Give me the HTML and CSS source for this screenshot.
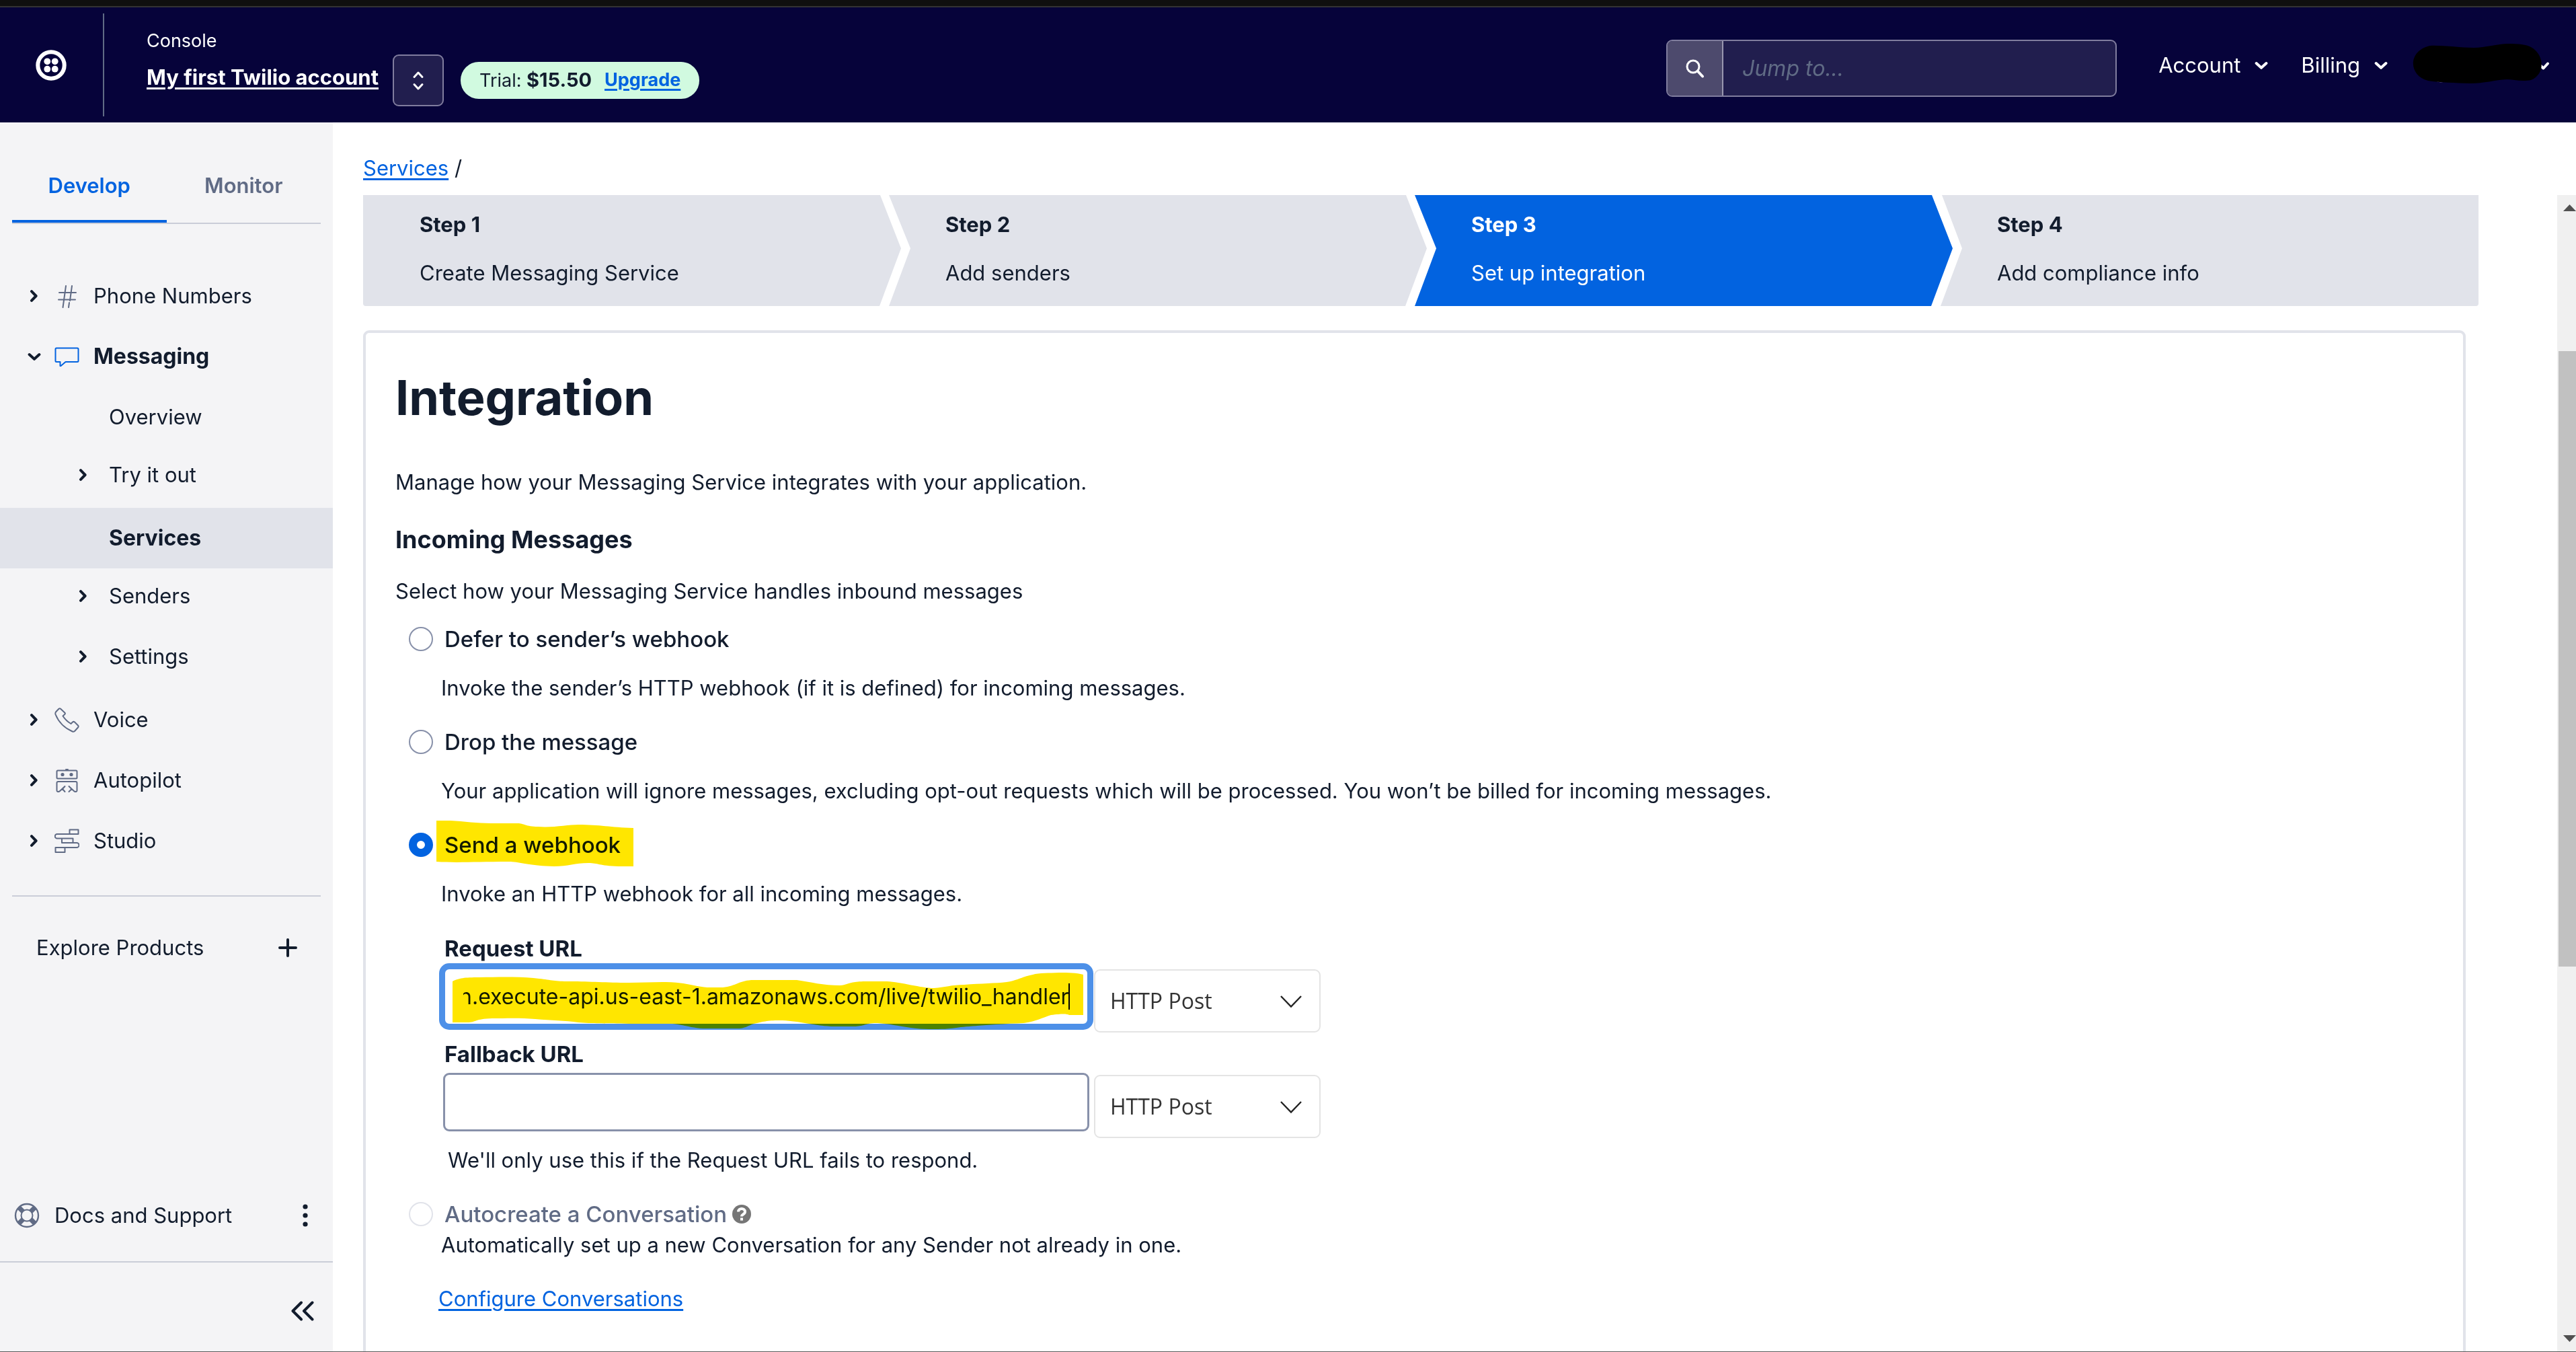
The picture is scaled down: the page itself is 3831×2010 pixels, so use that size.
FILE: index.html
```html
<!DOCTYPE html>
<html lang="en">
<head>
<meta charset="utf-8">
<meta name="viewport" content="width=device-width, initial-scale=1">
<title>Messaging Service integration | Console</title>
<link rel="stylesheet" href="styles.css">
</head>
<body>
<svg class="sprite" aria-hidden="true">
  <symbol id="chev-right" viewBox="0 0 18 18"><path d="M6 2.2 12.6 9 6 15.8" fill="none" stroke="currentColor" stroke-width="4" stroke-linecap="round" stroke-linejoin="round"/></symbol>
  <symbol id="chev-down" viewBox="0 0 20 20"><path d="M2.6 7 10 13.8 17.4 7" fill="none" stroke="currentColor" stroke-width="4" stroke-linecap="round" stroke-linejoin="round"/></symbol>
  <symbol id="select-arrow" viewBox="0 0 34 20"><path d="M2 2 17 17.500 32 2" fill="none" stroke="currentColor" stroke-width="2.400"/></symbol>
</svg>
<div class="app">
  <div class="window-edge"></div>
  <header class="topbar">
    <a class="logo" href="#" aria-label="Home">
      <svg viewBox="0 0 46 46"><circle cx="23" cy="23" r="19.700" fill="none" stroke="#fff" stroke-width="6"/><g fill="#fff"><circle cx="17.300" cy="17.300" r="4.900"/><circle cx="28.700" cy="17.300" r="4.900"/><circle cx="17.300" cy="28.700" r="4.900"/><circle cx="28.700" cy="28.700" r="4.900"/></g></svg>
    </a>
    <div class="account">
      <div class="account-names">
        <span class="account-kind">Console</span>
        <a class="account-name" href="#">My first Twilio account</a>
      </div>
      <div class="account-tools">
        <button class="switcher" type="button" aria-label="Switch account">
          <svg viewBox="0 0 18 30" fill="none" stroke="#fff" stroke-width="3" stroke-linecap="round" stroke-linejoin="round"><path d="M3 9.500 9 3l6 6.500M3 20.500 9 27l6-6.500"/></svg>
        </button>
        <div class="trial"><span>Trial: <b>$15.50</b></span><a href="#">Upgrade</a></div>
      </div>
    </div>
    <div class="topbar-right">
      <form class="search" role="search">
        <label class="search-icon" for="jump" aria-label="Search"><svg viewBox="0 0 28 28" fill="none" stroke="#fff" stroke-linecap="round"><circle cx="11" cy="11" r="9" stroke-width="3"/><path d="m18 18 7 7.500" stroke-width="4"/></svg></label>
        <input id="jump" type="text" placeholder="Jump to...">
      </form>
      <button class="menu menu-account" type="button">Account<svg><use href="#chev-down"/></svg></button>
      <button class="menu menu-billing" type="button">Billing<svg><use href="#chev-down"/></svg></button>
      <button class="user" type="button" aria-label="User menu">
        <svg viewBox="0 0 208 66"><path d="M29 51h30c-4 10-24 12-30 0z" fill="#c4a8ee"/><path d="m188.500 32 7 6.500 6.500-7" fill="none" stroke="#fff" stroke-width="4" stroke-linecap="round" stroke-linejoin="round"/><path d="M27 5C44 4 72 8 92 8c18 0 34-6 52-6 12 0 27 1 33 5 20 11 22 40 0 49-14 3-26-1-36-1-18 1-34 6-54 6-23-1-45-1-63-4C-6 49-6 12 27 5z" fill="#000"/></svg>
      </button>
    </div>
  </header>

  <div class="body">
    <nav class="sidebar" aria-label="Products">
      <div class="tabs" role="tablist">
        <button class="tab tab-active" type="button" role="tab" aria-selected="true">Develop</button>
        <button class="tab" type="button" role="tab" aria-selected="false">Monitor</button>
      </div>
      <ul class="nav">
        <li><a class="nav-row" href="#"><svg class="chev"><use href="#chev-right"/></svg><svg class="nav-icon" viewBox="0 0 37 37" fill="none" stroke="#606b85" stroke-width="2" stroke-linecap="round"><path d="M17 3 12.500 35M26 3 23 25M22 28l-1 7M7 13h25M6 23.500h25"/></svg>Phone Numbers</a></li>
        <li><a class="nav-row nav-open" href="#"><svg class="chev chev-open"><use href="#chev-down"/></svg><svg class="nav-icon" viewBox="0 0 37 37" fill="none" stroke="#0263e0" stroke-width="2" stroke-linejoin="round"><path d="M3 5.500h31a1.500 1.500 0 0 1 1.500 1.500v17.500a1.500 1.500 0 0 1-1.500 1.500H16.500L9.500 32H8.500V26H3a1.500 1.500 0 0 1-1.500-1.500V7A1.500 1.500 0 0 1 3 5.500z"/></svg>Messaging</a>
          <ul class="subnav">
            <li><a class="nav-row nav-leaf" href="#">Overview</a></li>
            <li><a class="nav-row nav-sub" href="#"><svg class="chev"><use href="#chev-right"/></svg>Try it out</a></li>
            <li><a class="nav-row nav-leaf nav-current" href="#" aria-current="page">Services</a></li>
            <li><a class="nav-row nav-sub" href="#"><svg class="chev"><use href="#chev-right"/></svg>Senders</a></li>
            <li><a class="nav-row nav-sub" href="#"><svg class="chev"><use href="#chev-right"/></svg>Settings</a></li>
          </ul>
        </li>
        <li><a class="nav-row" href="#"><svg class="chev"><use href="#chev-right"/></svg><svg class="nav-icon" viewBox="0 0 37 37" fill="none" stroke="#606b85" stroke-width="2" stroke-linejoin="round"><path d="M2 6.500 6.500 1.800q1.300-1 2.600 0l6.100 5.600q1.300 1.400 0 2.700L12.500 12.500Q17 19.500 24.500 24L27 21.500q1.500-1.200 3 0l5 5q1.300 1.500 0 3L30 35q-1.500 1.300-3.300.5Q8.500 27.500 1.500 10 1 8 2 6.500z"/></svg>Voice</a></li>
        <li><a class="nav-row" href="#"><svg class="chev"><use href="#chev-right"/></svg><svg class="nav-icon" viewBox="0 0 37 37" fill="none" stroke="#606b85" stroke-width="2" stroke-linecap="round" stroke-linejoin="round"><rect x="3.500" y="3.500" width="30" height="12" rx="1.500"/><path d="M17 2h3"/><circle cx="12" cy="9.500" r="1.600" fill="#606b85"/><circle cx="25" cy="9.500" r="1.600" fill="#606b85"/><path d="M15.500 35 12 31l3.500-4-8 7.500Q3.500 36 3.500 33V22q0-2 2-2h26q2 0 2 2v11q0 3-4 1.500l-8-7.500 4 4-4 4"/></svg>Autopilot</a></li>
        <li><a class="nav-row" href="#"><svg class="chev"><use href="#chev-right"/></svg><svg class="nav-icon" viewBox="0 0 37 37" fill="none" stroke="#606b85" stroke-width="2" stroke-linejoin="round"><path d="M22.500 8V1.500h13V8H4a3 3 0 0 0 0 6.500h23.500V21H11v-6.500M11 21h22a3 3 0 0 1 0 7H1.500v7h14v-7"/></svg>Studio</a></li>
      </ul>
      <a class="explore" href="#">Explore Products<svg viewBox="0 0 28 28" stroke="#121c2d" stroke-width="4" stroke-linecap="round"><path d="M14 2v24M2 14h24"/></svg></a>
      <div class="sidebar-foot">
        <div class="docs">
          <a href="#"><svg viewBox="0 0 38 38" fill="none" stroke="#606b85"><circle cx="19" cy="19" r="17" stroke-width="2.400"/><circle cx="19" cy="19" r="8.500" stroke-width="2"/><path d="m7.500 7.500 5.500 5.500M30.500 7.500 25 13M7.500 30.500 13 25M30.500 30.500 25 25" stroke-width="7"/></svg>Docs and Support</a>
          <button type="button" aria-label="More"><svg viewBox="0 0 8 36" fill="#121c2d"><circle cx="4" cy="5" r="3.600"/><circle cx="4" cy="18" r="3.600"/><circle cx="4" cy="31" r="3.600"/></svg></button>
        </div>
        <div class="collapse"><button type="button" aria-label="Collapse sidebar"><svg viewBox="0 0 34 30" fill="none" stroke="#121c2d" stroke-width="4" stroke-linecap="round" stroke-linejoin="round"><path d="M15 2.500 2.500 15 15 27.500M31.500 2.500 19 15l12.500 12.500"/></svg></button></div>
      </div>
    </nav>

    <main class="main">
      <div class="crumbs"><a href="#">Services</a> /</div>
      <div class="scroller">
        <div class="content">
          <ol class="steps">
            <li class="step"><b>Step 1</b><span>Create Messaging Service</span></li>
            <li class="step"><b>Step 2</b><span>Add senders</span></li>
            <li class="step step-current" aria-current="step"><b>Step 3</b><span>Set up integration</span></li>
            <li class="step"><b>Step 4</b><span>Add compliance info</span></li>
          </ol>
          <section class="card">
            <h1>Integration</h1>
            <p class="intro">Manage how your Messaging Service integrates with your application.</p>
            <h2>Incoming Messages</h2>
            <p class="lead">Select how your Messaging Service handles inbound messages</p>
            <form class="options">
              <div class="option">
                <label class="choice"><input type="radio" name="inbound"><span>Defer to sender’s webhook</span></label>
                <p>Invoke the sender’s HTTP webhook (if it is defined) for incoming messages.</p>
              </div>
              <div class="option">
                <label class="choice"><input type="radio" name="inbound"><span>Drop the message</span></label>
                <p>Your application will ignore messages, excluding opt-out requests which will be processed. You won’t be billed for incoming messages.</p>
              </div>
              <div class="option">
                <label class="choice"><input type="radio" name="inbound" checked><span>Send a webhook</span>
                  <svg class="marker marker-choice" viewBox="0 0 293 70"><path d="M0 0h21c20 1 40 4 60 4h40c9 0 12 5 30 5 21 2 45-3 60-3 32 0 48 4 82 5v57h-22c-30-1-30-5-45-5-20 0-30 5-51 5-40-1-50-7-69-7C60 61 30 63 0 61z"/></svg></label>
                <p>Invoke an HTTP webhook for all incoming messages.</p>
              </div>
              <div class="fields">
                <label class="field-label" for="request-url">Request URL</label>
                <div class="field-row">
                  <div class="url-box">
                    <input class="url url-focus" id="request-url" type="text" value="n.execute-api.us-east-1.amazonaws.com/live/twilio_handler">
                    <span class="caret"></span>
                    <svg class="marker marker-url" viewBox="673 1440 940 92"><path d="M673 1459C683 1454 690 1453 713 1453C750 1452 780 1452 802 1455C820 1457 825 1459 847 1459C880 1459 900 1461 936 1461L985 1460C1020 1459 1035 1468 1057 1468H1075C1095 1466 1100 1457 1121 1457H1185C1205 1460 1225 1465 1249 1465C1262 1464 1262 1459 1290 1459H1319C1340 1460 1370 1469 1389 1469C1405 1468 1415 1464 1434 1464C1460 1462 1480 1462 1497 1460C1515 1457 1520 1452 1536 1449C1545 1446 1560 1447 1575 1446C1590 1446 1600 1446 1611 1449V1509H1590C1586 1507 1580 1507 1563 1509C1550 1513 1540 1519 1522 1521C1495 1522 1450 1525 1429 1527C1410 1530 1400 1530 1383 1530C1350 1530 1325 1521 1300 1521C1285 1522 1285 1526 1268 1526H1236C1205 1524 1185 1517 1159 1517C1140 1517 1135 1519 1121 1522C1110 1526 1108 1529 1096 1529H1051C1030 1529 1020 1524 1000 1522H936C900 1521 880 1522 860 1520C840 1517 820 1517 796 1515C775 1513 750 1514 732 1514C705 1515 710 1519 697 1520H673Z"/></svg>
                  </div>
                  <div class="method"><select aria-label="Request URL method"><option>HTTP Post</option><option>HTTP Get</option></select><svg><use href="#select-arrow"/></svg></div>
                </div>
                <label class="field-label" for="fallback-url">Fallback URL</label>
                <div class="field-row">
                  <div class="url-box"><input class="url" id="fallback-url" type="text"></div>
                  <div class="method"><select aria-label="Fallback URL method"><option>HTTP Post</option><option>HTTP Get</option></select><svg><use href="#select-arrow"/></svg></div>
                </div>
                <p class="hint">We'll only use this if the Request URL fails to respond.</p>
              </div>
              <div class="option option-tight">
                <label class="choice choice-off"><input type="radio" name="inbound" disabled><span>Autocreate a Conversation</span><svg class="help" viewBox="0 0 28 28"><circle cx="14" cy="14" r="14" fill="#767676"/><path d="M9 10.500C9 4.500 19 4.500 19 10.500c0 4-5 3.500-5 7" fill="none" stroke="#fff" stroke-width="4"/><rect x="12" y="19.500" width="4" height="4" fill="#fff"/></svg></label>
                <p>Automatically set up a new Conversation for any Sender not already in one.</p>
              </div>
              <a class="configure" href="#">Configure Conversations</a>
            </form>
          </section>
        </div>
        <div class="scrollbar" aria-hidden="true">
          <svg viewBox="0 0 28 38"><path d="M9 24 18.500 14 28 24z" fill="#505050"/></svg>
          <span class="gap-above"></span><span class="thumb"></span><span class="gap-below"></span>
          <svg viewBox="0 0 28 38"><path d="M9 14 18.500 24 28 14z" fill="#505050"/></svg>
        </div>
      </div>
    </main>
  </div>
  <div class="window-foot"></div>
</div>
<script src="app.js"></script>
</body>
</html>
```
FILE: styles.css
```css
:root {
  --ink: #121c2d;
  --muted: #606b85;
  --blue: #0263e0;
  --line: #cacdd8;
  --soft: #e1e3ea;
  --navy: #06033a;
}
* { box-sizing: border-box; }
body {
  margin: 0;
  font: 400 31px/44px Inter, "Liberation Sans", sans-serif;
  color: var(--ink);
  background: #fff;
}
h1, h2, p, ul, ol { margin: 0; padding: 0; }
ul, ol { list-style: none; }
a { color: var(--blue); text-underline-offset: 4px; text-decoration-thickness: 3px; }
button { font: inherit; color: inherit; background: none; border: 0; padding: 0; margin: 0; cursor: pointer; }
svg { display: block; flex: none; }
.sprite { position: absolute; width: 0; height: 0; }

.app { display: flex; flex-direction: column; height: 100vh; overflow: hidden; }
.window-edge { flex: none; height: 11px; background: #0f0f0f; border-bottom: 2px solid #333; }
.window-foot { flex: none; height: 1px; background: #5a5a5a; }

/* Top bar */
.topbar { flex: none; display: flex; height: 171px; background: var(--navy); color: #fff; }
.logo { display: flex; align-items: center; width: 155px; margin: 9px 0; padding-left: 53px; border-right: 2px solid var(--muted); }
.logo svg { width: 46px; height: 46px; }
.account { display: flex; align-items: flex-start; gap: 21px; padding-left: 63px; }
.account-names { display: flex; flex-direction: column; gap: 14px; padding-top: 32px; }
.account-kind { font-size: 27px; line-height: 36px; }
.account-name { color: #fff; font-weight: 700; white-space: nowrap; }
.account-tools { display: flex; align-items: center; gap: 25px; padding-top: 70px; }
.switcher { display: flex; align-items: center; justify-content: center; width: 76px; height: 77px; background: #211e4e; border: 2px solid #807d9e; border-radius: 9px; }
.switcher svg { width: 18px; height: 30px; }
.trial { display: flex; gap: 19px; padding: 9px 28px; border-radius: 27px; background: #d1fae0; color: var(--ink); font-size: 27px; line-height: 36px; white-space: nowrap; }
.trial b, .trial a { font-weight: 700; }
.trial b { font-size: 29px; }
.topbar-right { display: flex; align-items: center; margin-left: auto; padding-right: 36px; }
.search { display: flex; width: 670px; height: 85px; margin: 10px 62px 0 0; border: 2px solid #807d9e; border-radius: 9px; background: #211e4e; overflow: hidden; }
.search-icon { display: flex; align-items: center; justify-content: center; width: 83px; background: #4d4a6d; border-right: 2px solid #9a98b0; }
.search-icon svg { width: 28px; height: 28px; }
.search input { flex: 1; min-width: 0; border: 0; padding: 0 28px; background: none; color: #fff; font: inherit; font-size: 32px; outline: 0; }
.search input::placeholder { color: var(--muted); font-style: italic; opacity: 1; }
.menu { display: flex; align-items: center; gap: 21px; }
.menu svg { width: 20px; height: 20px; }
.menu-account { margin-right: 49px; }
.menu-billing { margin-right: 36px; }
.user { margin-bottom: 2px; }
.user svg { width: 208px; height: 66px; }

.body { flex: 1; min-height: 0; display: grid; grid-template-columns: 495px minmax(0, 1fr); }

/* Sidebar */
.sidebar { display: flex; flex-direction: column; min-height: 0; background: #f4f4f6; }
.sidebar a { color: var(--ink); text-decoration: none; }
.tabs { display: flex; margin: 0 18px; border-bottom: 2px solid var(--line); }
.tab { flex: 1; padding: 72px 0 29px; border-bottom: 4px solid transparent; color: var(--muted); font-weight: 600; }
.tab-active { color: var(--blue); border-bottom-color: var(--blue); }
.nav { padding: 62px 0 36px; }
.nav-row { display: flex; align-items: center; height: 90px; padding-left: 41px; }
.chev { width: 18px; height: 18px; margin-right: 22px; }
.chev-open { width: 20px; height: 20px; margin-right: 20px; }
.nav-icon { width: 37px; height: 37px; margin-right: 21px; }
.nav-open, .nav-current { font-size: 32px; font-weight: 700; }
.nav-leaf { padding-left: 162px; }
.nav-sub { padding: 0 0 8px 114px; }
.nav-sub .chev { margin-right: 30px; }
.nav-current { background: var(--soft); }
.explore { display: flex; align-items: center; justify-content: space-between; margin: 0 18px; padding: 54px 35px 0 36px; border-top: 2px solid var(--line); }
.explore svg { width: 28px; height: 28px; }
.sidebar-foot { margin-top: auto; }
.docs { display: flex; align-items: center; justify-content: space-between; height: 138px; padding: 0 37px 0 21px; border-bottom: 2px solid var(--line); }
.docs a { display: flex; align-items: center; gap: 22px; }
.docs a svg { width: 38px; height: 38px; }
.docs button svg { width: 8px; height: 36px; }
.collapse { display: flex; justify-content: flex-end; height: 132px; padding: 12px 28px 0 0; }
.collapse svg { width: 34px; height: 30px; }

/* Main column */
.main { display: flex; flex-direction: column; min-height: 0; }
.crumbs { flex: none; padding: 46px 0 18px 45px; }
.scroller { flex: 1; min-height: 0; display: flex; overflow: hidden; }
.content { flex: 1; min-width: 0; padding: 0 117px 0 45px; }

.steps { display: flex; }
.step {
  flex: 1; display: flex; flex-direction: column; gap: 28px;
  padding: 22px 40px 27px 84px; margin-left: -18px; background: var(--soft);
  clip-path: polygon(0 0, calc(100% - 31px) 0, 100% 48%, calc(100% - 32px) 100%, 0 100%, 32px 48%);
}
.step:first-child { margin-left: 0; border-bottom-left-radius: 4px; clip-path: polygon(0 0, calc(100% - 31px) 0, 100% 48%, calc(100% - 32px) 100%, 0 100%); }
.step:last-child { border-bottom-right-radius: 4px; clip-path: polygon(2px 0, 100% 0, 100% 100%, 0 100%, 32px 48%); }
.step b { font-weight: 700; }
.step-current { background: var(--blue); color: #fff; }

.card { margin: 36px 19px 0 0; padding: 52px 44px 140px; border: 4px solid var(--soft); border-radius: 9px; }
h1 { font-size: 72px; line-height: 88px; font-weight: 700; }
.intro { margin-top: 60px; }
h2 { margin-top: 41px; font-size: 36px; line-height: 44px; font-weight: 700; }
.lead { margin-top: 33px; }

.options { margin-top: 27px; padding-left: 20px; }
.option { margin-bottom: 36px; }
.option p { margin: 29px 0 0 48px; }
.option-tight p { margin-top: 2px; }
.choice { position: relative; display: flex; align-items: center; width: max-content; font-size: 33px; font-weight: 500; }
.choice input { appearance: none; width: 36px; height: 36px; margin: 0 17px 0 0; border: 2px solid #8891aa; border-radius: 50%; background: #fff; }
.choice input:checked { border: 12px solid var(--blue); }
.choice-off { color: var(--muted); }
.choice-off input { border-color: var(--soft); }
.help { width: 28px; height: 28px; margin-left: 8px; }

/* Highlighter strokes laid over the page */
.marker { position: absolute; fill: #ffe600; mix-blend-mode: multiply; pointer-events: none; }
.marker-choice { left: 41px; top: -14px; width: 293px; height: 70px; }
.marker-url { left: 14px; top: 2px; width: 940px; height: 92px; }

.fields { margin: 37px 0 36px 51px; }
.field-label { display: block; margin-bottom: 6px; padding-left: 2px; font-size: 33px; font-weight: 700; }
.field-row { display: flex; align-items: flex-start; gap: 7px; margin-bottom: 10px; }
.url-box { position: relative; }
.url { display: block; width: 961px; height: 87px; padding: 0 27px; border: 3px solid #8891aa; border-radius: 9px; background: #fff; color: var(--ink); font: 400 32px/44px Inter, "Liberation Sans", sans-serif; outline: 0; }
.url-focus { border-color: #4d90e8; box-shadow: 0 0 0 6px #4d90e8; }
.caret { position: absolute; left: 930px; top: 24px; width: 2px; height: 39px; background: #000; }
.method { position: relative; margin-top: 3px; }
.method select { appearance: none; display: block; width: 337px; height: 94px; padding: 0 22px; border: 2px solid #e4e4e4; border-radius: 9px; background: #fff; color: #333; font: 400 32px/44px "Open Sans", "Noto Sans", sans-serif; }
.method svg { position: absolute; right: 27px; top: 38px; width: 34px; height: 20px; color: #222; pointer-events: none; }
.hint { padding: 1px 0 0 7px; }
.configure { display: inline-block; margin-left: 44px; }

.scrollbar { flex: none; display: flex; flex-direction: column; width: 28px; background: #f0f0f0; }
.scrollbar svg { width: 28px; height: 38px; }
.gap-above { flex: 194; }
.thumb { flex: 915; margin-left: 2px; background: #c1c1c1; }
.gap-below { flex: 534; }
```
FILE: app.js
```js
// Keep the end of a long URL in view, next to the insertion point.
const url = document.getElementById('request-url');
url.scrollLeft = url.scrollWidth;
```
